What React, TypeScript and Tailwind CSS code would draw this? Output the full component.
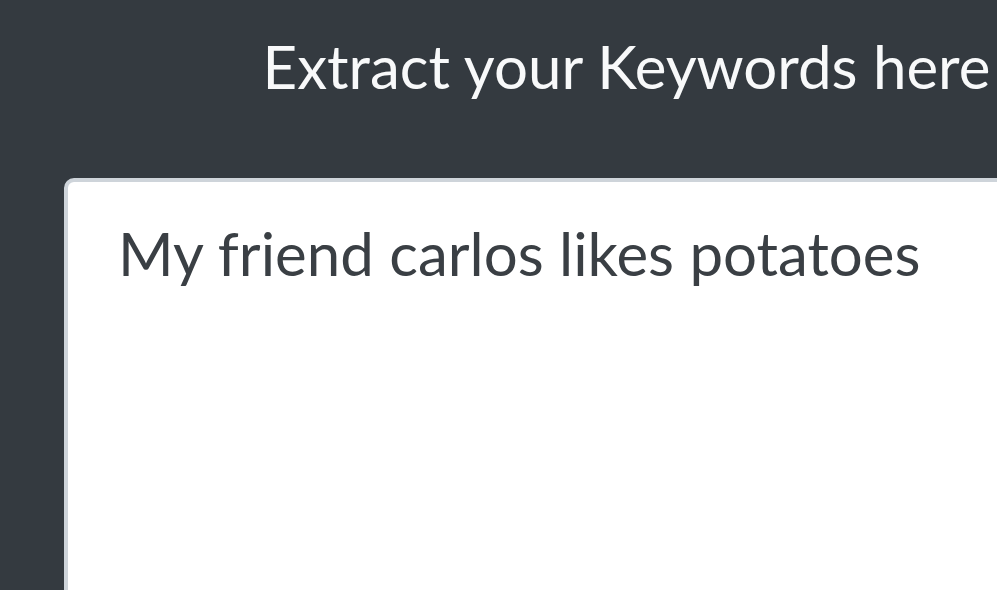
export default function App() {
  return (
    <div className="h-[590px] w-[997px] overflow-hidden bg-[#343a40] font-['Lato',sans-serif]">
      <div className="w-[1253px]">
        <h1 className="pt-[27px] text-center text-[60px] leading-[78px] text-[#f8f9fa]">
          Extract your Keywords here
        </h1>
        <div className="pl-[64px] pt-[73px]">
          <textarea
            readOnly
            defaultValue="My friend carlos likes potatoes"
            className="h-[500px] w-[1125px] resize-none rounded-[10px] border-[4px] border-[#ced4da] bg-white px-[50px] pt-[32px] pb-[30px] text-[60px] leading-[78px] text-[#3a3f44] outline-none"
          />
        </div>
      </div>
    </div>
  );
}
